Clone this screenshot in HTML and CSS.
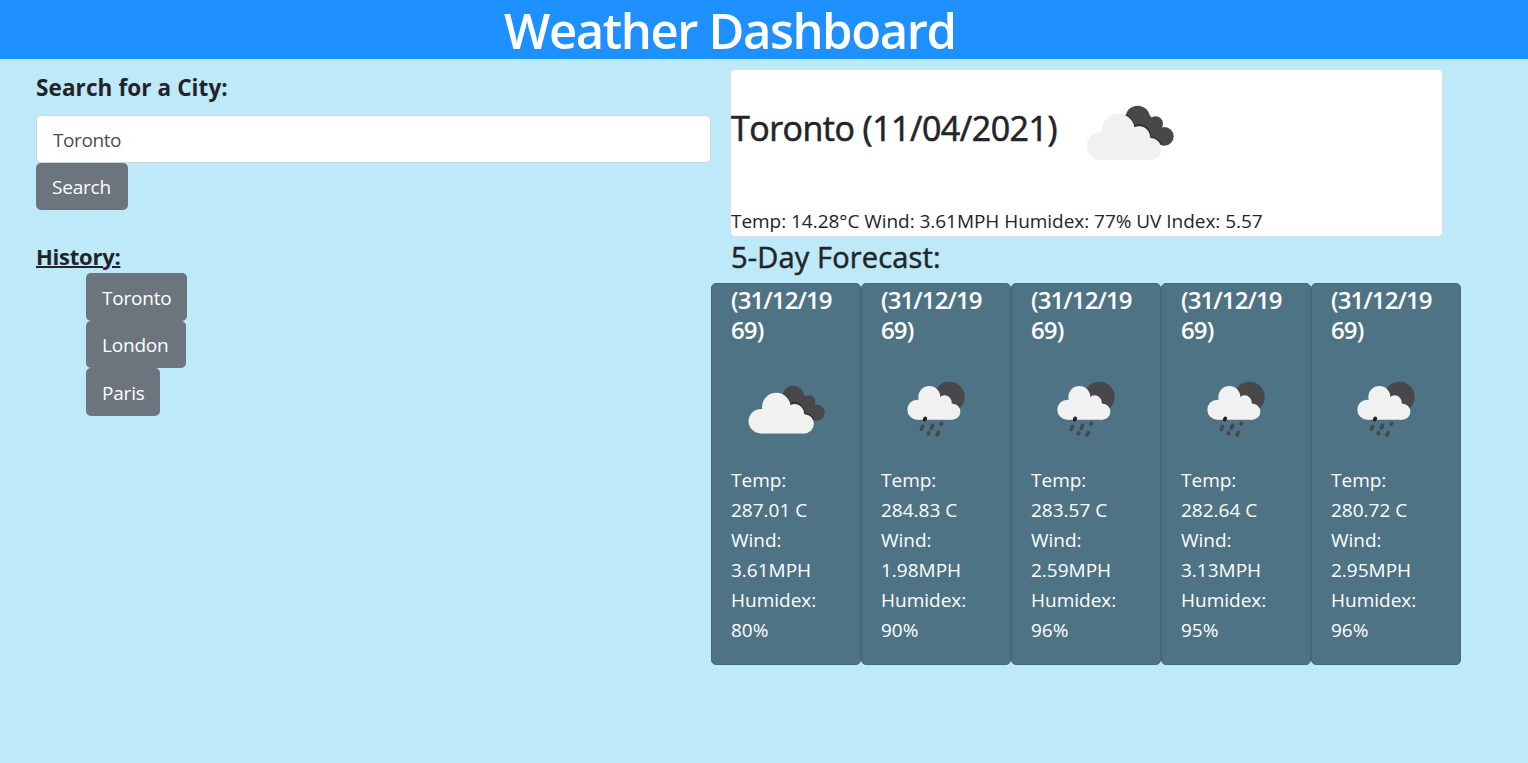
FILE: index.html
```html
<!DOCTYPE html>
<html lang="en">
<head>
<meta charset="utf-8">
<title>Weather Dashboard</title>
<link rel="stylesheet" href="styles.css">
</head>
<body>
<svg class="defs" aria-hidden="true">
  <symbol id="clouds" viewBox="0 0 360 270">
    <g fill="#48484a"><circle cx="203" cy="84" r="37"/><circle cx="257" cy="101" r="22"/><circle cx="283" cy="139" r="28"/><path d="M170 90L230 66L275 115L283 167L230 150Z"/></g>
    <path d="M167 75A50 50 0 0 1 192 108A34 34 0 0 1 240 143A34 34 0 0 1 273 164" fill="none" stroke="#29292b" stroke-width="4"/>
    <g fill="#f1f1f0"><circle cx="92" cy="168" r="42"/><circle cx="145" cy="120" r="49"/><circle cx="208" cy="141" r="32"/><circle cx="241" cy="177" r="33"/><path d="M92 140H241V210H92Z"/></g>
  </symbol>
  <symbol id="rain" viewBox="0 0 255 225">
    <circle cx="163" cy="81" r="46" fill="#48484a"/>
    <g fill="#f1f1f1"><circle cx="67" cy="119" r="30"/><circle cx="103" cy="81" r="33"/><circle cx="149" cy="97" r="21"/><circle cx="172" cy="125" r="24"/><path d="M67 100H172V149H67Z"/></g>
    <g stroke="#48484a" stroke-width="11" stroke-linecap="round"><path d="M79 178L83 169M109 175L113 166M138 163L140 160M100 191L101 189M126 195L130 187"/><path stroke="#222" d="M89 149L91 145"/></g>
  </symbol>
</svg>
<header class="banner"><h1 class="title">Weather Dashboard</h1></header>
<main class="layout">
  <section class="sidebar">
    <h2 class="label">Search for a City:</h2>
    <input class="field" type="text" value="Toronto">
    <button class="btn">Search</button>
    <h2 class="label history-label">History:</h2>
    <div class="history">
      <button class="btn b1">Toronto</button>
      <button class="btn b2">London</button>
      <button class="btn b3">Paris</button>
    </div>
  </section>
  <section class="results">
    <article class="today">
      <div class="today-head"><h3 class="city">Toronto (11/04/2021)</h3><svg class="today-icon"><use href="#clouds"/></svg></div>
      <p class="today-text">Temp: 14.28°C Wind: 3.61MPH Humidex: 77% UV Index: 5.57</p>
    </article>
    <h4 class="forecast-title">5-Day Forecast:</h4>
    <div class="forecast">
      <article class="day"><h5 class="date">(31/12/19<br>69)</h5><div class="icon"><svg class="clouds"><use href="#clouds"/></svg></div><p class="stats">Temp:<br>287.01 C<br>Wind:<br>3.61MPH<br>Humidex:<br>80%</p></article>
      <article class="day"><h5 class="date">(31/12/19<br>69)</h5><div class="icon"><svg class="rain"><use href="#rain"/></svg></div><p class="stats">Temp:<br>284.83 C<br>Wind:<br>1.98MPH<br>Humidex:<br>90%</p></article>
      <article class="day"><h5 class="date">(31/12/19<br>69)</h5><div class="icon"><svg class="rain"><use href="#rain"/></svg></div><p class="stats">Temp:<br>283.57 C<br>Wind:<br>2.59MPH<br>Humidex:<br>96%</p></article>
      <article class="day"><h5 class="date">(31/12/19<br>69)</h5><div class="icon"><svg class="rain"><use href="#rain"/></svg></div><p class="stats">Temp:<br>282.64 C<br>Wind:<br>3.13MPH<br>Humidex:<br>95%</p></article>
      <article class="day"><h5 class="date">(31/12/19<br>69)</h5><div class="icon"><svg class="rain"><use href="#rain"/></svg></div><p class="stats">Temp:<br>280.72 C<br>Wind:<br>2.95MPH<br>Humidex:<br>96%</p></article>
    </div>
  </section>
</main>
</body>
</html>
```
FILE: styles.css
```css
* { box-sizing: border-box; }
body { margin: 0; height: 763px; overflow: hidden; background: #bee9f8; color: #212529; font: 19px/30px "Open Sans", "Noto Sans", sans-serif; }
h1, h2, h3, h4, h5, p { margin: 0; }
.defs { position: absolute; width: 0; height: 0; }
.banner { height: 59px; background: #1e90ff; padding-left: 504px; }
.title { color: #fff; font-size: 49px; font-weight: 600; line-height: 60px; letter-spacing: -1.4px; white-space: nowrap; }
.layout { display: flex; padding-left: 36px; }
.sidebar { width: 675px; padding-top: 14px; }
.label { font-size: 22.5px; font-weight: 700; line-height: 30px; letter-spacing: .1px; }
.field { display: block; width: 100%; height: 48px; margin-top: 12px; padding: 2px 16px 0; border: 1px solid #ced4da; border-radius: 5px; background: #fff; color: #495057; font: inherit; letter-spacing: -.4px; }
.btn { display: block; height: 47.5px; padding: 0 0 0 16px; border: 0; border-radius: 5px; background: #6c757d; color: #fff; font: inherit; text-align: left; letter-spacing: -.2px; }
.sidebar > .btn { width: 92px; height: 47px; }
.history-label { margin-top: 31px; font-size: 22px; letter-spacing: -.25px; text-decoration: underline; text-decoration-thickness: 2px; }
.history { padding: 2px 0 0 50px; }
.history .btn { padding-top: 2px; }
.b1 { width: 101px; }
.b2 { width: 100px; }
.b3 { width: 74px; }
.results { width: 750px; padding-top: 10px; }
.today { width: 713px; height: 168px; margin-left: 19px; border: 1px solid #dcdfe0; border-radius: 5px; background: #fff; }
.today-head { display: flex; align-items: center; height: 136px; }
.city { width: 339px; font-size: 34px; font-weight: 500; line-height: 42px; letter-spacing: -.52px; -webkit-text-stroke: .6px currentColor; margin-top: -20px; white-space: nowrap; }
.today-icon { width: 120px; height: 90px; margin-top: -6px; }
.today-text { line-height: 30px; letter-spacing: -.04px; white-space: nowrap; }
.forecast-title { height: 46px; margin-left: 20px; font-size: 29px; font-weight: 500; line-height: 40px; letter-spacing: .15px; -webkit-text-stroke: .5px currentColor; }
.forecast { display: flex; }
.day { width: 150px; height: 382px; padding: 1px 0 0 19px; border: 1px solid #456777; border-radius: 5px; background: #4e7384; color: #fff; }
.date { font-size: 24px; font-weight: 600; line-height: 30px; letter-spacing: -.9px; }
.icon { height: 120px; padding-top: 25px; }
.icon svg { display: block; }
.clouds { width: 105px; height: 79px; margin: 2px 0 0 3px; }
.rain { width: 85px; height: 75px; margin-left: 14px; }
```
